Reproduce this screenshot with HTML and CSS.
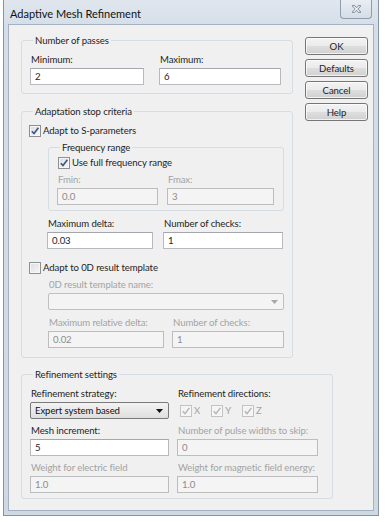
FILE: index.html
```html
<!DOCTYPE html>
<html lang="en">
<head>
    <meta charset="UTF-8">
    <meta name="viewport" content="width=device-width, initial-scale=1.0">
    <title>Adaptive Mesh Refinement</title>
    <link rel="stylesheet" href="styles.css">
</head>
<body>
    <div class="window">
        <div class="titlebar">
            <span class="title">Adaptive Mesh Refinement</span>
            <span class="close-btn">
                <svg width="9" height="8" viewBox="0 0 9 8">
                    <path d="M1.5 1 L7.5 7 M7.5 1 L1.5 7" stroke="#7d8794" stroke-width="2.6" stroke-linecap="square"/>
                    <path d="M1.5 1 L7.5 7 M7.5 1 L1.5 7" stroke="#f4f6f8" stroke-width="1.1"/>
                </svg>
            </span>
        </div>

        <div class="client">
            <div class="top">
                <div class="groups">
                    <fieldset class="group passes">
                        <legend>Number of passes</legend>
                        <div class="fields">
                            <div class="field">
                                <label>Minimum:</label>
                                <div class="input">2</div>
                            </div>
                            <div class="field">
                                <label>Maximum:</label>
                                <div class="input">6</div>
                            </div>
                        </div>
                    </fieldset>

                    <fieldset class="group stop">
                        <legend>Adaptation stop criteria</legend>
                        <div class="check">
                            <span class="box checked"><svg width="10" height="10" viewBox="0 0 10 10"><path d="M1.8 5.2 L4 7.6 L8.4 1.8" fill="none" stroke="#3b5688" stroke-width="1.6"/></svg></span>
                            <span>Adapt to S-parameters</span>
                        </div>

                        <fieldset class="group freq">
                            <legend>Frequency range</legend>
                            <div class="check">
                                <span class="box checked"><svg width="10" height="10" viewBox="0 0 10 10"><path d="M1.8 5.2 L4 7.6 L8.4 1.8" fill="none" stroke="#3b5688" stroke-width="1.6"/></svg></span>
                                <span>Use full frequency range</span>
                            </div>
                            <div class="fields">
                                <div class="field disabled">
                                    <label>Fmin:</label>
                                    <div class="input">0.0</div>
                                </div>
                                <div class="field disabled">
                                    <label>Fmax:</label>
                                    <div class="input">3</div>
                                </div>
                            </div>
                        </fieldset>

                        <div class="fields delta">
                            <div class="field">
                                <label>Maximum delta:</label>
                                <div class="input">0.03</div>
                            </div>
                            <div class="field">
                                <label>Number of checks:</label>
                                <div class="input">1</div>
                            </div>
                        </div>

                        <div class="check template-check">
                            <span class="box"></span>
                            <span>Adapt to 0D result template</span>
                        </div>

                        <div class="field disabled template">
                            <label>0D result template name:</label>
                            <div class="select">
                                <span></span>
                                <svg width="7" height="4" viewBox="0 0 7 4"><path d="M0 0 H7 L3.5 4 Z" fill="#a8a8a8"/></svg>
                            </div>
                        </div>

                        <div class="fields rel-delta">
                            <div class="field disabled">
                                <label>Maximum relative delta:</label>
                                <div class="input">0.02</div>
                            </div>
                            <div class="field disabled">
                                <label>Number of checks:</label>
                                <div class="input">1</div>
                            </div>
                        </div>
                    </fieldset>
                </div>

                <div class="buttons">
                    <button class="btn">OK</button>
                    <button class="btn">Defaults</button>
                    <button class="btn">Cancel</button>
                    <button class="btn">Help</button>
                </div>
            </div>

            <fieldset class="group refine">
                <legend>Refinement settings</legend>
                <div class="fields">
                    <div class="field">
                        <label>Refinement strategy:</label>
                        <div class="select active">
                            <span>Expert system based</span>
                            <svg width="7" height="4" viewBox="0 0 7 4"><path d="M0 0 H7 L3.5 4 Z" fill="#111"/></svg>
                        </div>
                    </div>
                    <div class="field">
                        <label>Refinement directions:</label>
                        <div class="dirs">
                            <div class="check disabled">
                                <span class="box checked"><svg width="10" height="10" viewBox="0 0 10 10"><path d="M1.8 5.2 L4 7.6 L8.4 1.8" fill="none" stroke="#b4b4b4" stroke-width="1.4"/></svg></span>
                                <span>X</span>
                            </div>
                            <div class="check disabled">
                                <span class="box checked"><svg width="10" height="10" viewBox="0 0 10 10"><path d="M1.8 5.2 L4 7.6 L8.4 1.8" fill="none" stroke="#b4b4b4" stroke-width="1.4"/></svg></span>
                                <span>Y</span>
                            </div>
                            <div class="check disabled">
                                <span class="box checked"><svg width="10" height="10" viewBox="0 0 10 10"><path d="M1.8 5.2 L4 7.6 L8.4 1.8" fill="none" stroke="#b4b4b4" stroke-width="1.4"/></svg></span>
                                <span>Z</span>
                            </div>
                        </div>
                    </div>
                    <div class="field">
                        <label>Mesh increment:</label>
                        <div class="input">5</div>
                    </div>
                    <div class="field disabled">
                        <label>Number of pulse widths to skip:</label>
                        <div class="input">0</div>
                    </div>
                    <div class="field disabled">
                        <label>Weight for electric field</label>
                        <div class="input">1.0</div>
                    </div>
                    <div class="field disabled">
                        <label>Weight for magnetic field energy:</label>
                        <div class="input">1.0</div>
                    </div>
                </div>
            </fieldset>
        </div>
    </div>
</body>
</html>
```

FILE: styles.css
```css
body {
    margin: 0;
    background: #fff;
    font-family: Lato, "Liberation Sans", sans-serif;
    font-size: 9.6px;
    letter-spacing: -0.1px;
    color: #1e1e1e;
}
.window {
    margin-left: 3px;
    width: 376px;
    height: 516px;
    box-sizing: border-box;
    border: 1px solid #8593a3;
    border-top: 0;
    background: linear-gradient(180deg, #dfe6ee 0, #d4dde8 30px, #cfd9e4 100%);
    padding: 0 4px 4px;
    display: flex;
    flex-direction: column;
}
.titlebar {
    height: 24px;
    display: flex;
    justify-content: space-between;
    align-items: flex-start;
}
.title {
    font-size: 11px;
    letter-spacing: 0;
    color: #111;
    padding: 7px 0 0 2px;
    line-height: 13px;
}
.close-btn {
    width: 32px;
    height: 19px;
    box-sizing: border-box;
    margin-right: 2px;
    border: 1px solid #8f9cac;
    border-top: 0;
    border-radius: 0 0 4px 4px;
    background: linear-gradient(180deg, #e9eef4, #d5dde7);
    display: flex;
    align-items: center;
    justify-content: center;
}
.client {
    flex: 1;
    border: 1px solid #a3b1c0;
    background: #f0f0f0;
    padding: 9px 0 0 12px;
}
.top {
    display: flex;
    gap: 12px;
    align-items: flex-start;
    margin-bottom: 10px;
}
.groups {
    width: 272px;
    display: flex;
    flex-direction: column;
    gap: 11px;
}
.buttons {
    display: flex;
    flex-direction: column;
    gap: 4px;
    margin-top: 3px;
}
.btn {
    width: 63px;
    height: 18px;
    padding: 0;
    border: 1px solid #767676;
    border-radius: 3px;
    background: linear-gradient(180deg, #f3f3f3 0%, #ebebeb 48%, #dedede 52%, #d0d0d0 100%);
    box-shadow: inset 0 0 0 1px rgba(255, 255, 255, 0.7);
    font: inherit;
    letter-spacing: inherit;
    color: #1e1e1e;
}

/* group boxes */
.group {
    margin: 0;
    border: 1px solid #d5dde3;
    border-radius: 3px;
    min-width: 0;
}
.group legend {
    padding: 0 2px;
    margin-left: 3px;
    line-height: 13px;
}
.passes {
    padding: 6px 8px 8px;
}
.stop {
    padding: 6px 8px 9px;
}
.freq {
    margin: 4px 0 0 18px;
    padding: 2px 8px 5px;
}
.refine {
    width: 312px;
    box-sizing: border-box;
    padding: 6px 13px 5px 8px;
}

.fields {
    display: grid;
}
.passes .fields {
    grid-template-columns: 114px 122px;
    column-gap: 15px;
}
.freq .fields {
    grid-template-columns: 101px 107px;
    column-gap: 9px;
    margin-top: 4px;
}
.fields.delta {
    grid-template-columns: 106px 120px;
    column-gap: 10px;
    margin: 6px 0 0 17px;
}
.fields.rel-delta {
    grid-template-columns: 116px 112px;
    column-gap: 8px;
    margin: 6px 0 0 18px;
}
.refine .fields {
    grid-template-columns: 139px 141px;
    column-gap: 8px;
    row-gap: 5px;
}

.field label {
    display: block;
    height: 13px;
    line-height: 13px;
    padding-left: 1px;
    white-space: nowrap;
}
.field.disabled label {
    color: #a3a3a3;
}
.input {
    margin-top: 2px;
    height: 17px;
    box-sizing: border-box;
    padding: 0 4px;
    line-height: 15px;
    background: #fff;
    border: 1px solid #b7bbc0;
    border-top-color: #a4a8ae;
}
.field.disabled .input {
    background: #f4f4f4;
    border-color: #bdbdbd;
    color: #8c8c8c;
}

.template {
    margin: 4px 0 0 18px;
}
.select {
    margin-top: 2px;
    height: 17px;
    box-sizing: border-box;
    padding: 0 5px 0 4px;
    display: flex;
    align-items: center;
    justify-content: space-between;
    border: 1px solid #c0c0c0;
    border-radius: 2px;
    background: #f4f4f4;
}
.select.active {
    border-color: #7a7a7a;
    background: linear-gradient(180deg, #f2f2f2 0%, #e9e9e9 50%, #dedede 100%);
    color: #111;
}

/* check boxes */
.check {
    display: flex;
    align-items: center;
    gap: 2px;
    height: 13px;
    line-height: 13px;
}
.box {
    width: 12px;
    height: 12px;
    box-sizing: border-box;
    border: 1px solid #8e8f8f;
    background: linear-gradient(135deg, #dcdde0 0%, #f7f7f7 100%);
    box-shadow: inset 0 0 0 1px #f6f6f6;
    display: flex;
    align-items: center;
    justify-content: center;
}
.stop > .check {
    margin-left: -1px;
}
.freq .check {
    margin-left: 1px;
}
.template-check {
    margin: 12px 0 0 -1px;
}
.check.disabled {
    color: #a3a3a3;
}
.check.disabled .box {
    border-color: #c3c3c3;
    background: #f4f4f4;
}
.dirs {
    display: flex;
    gap: 11px;
    margin-top: 2px;
    height: 17px;
    align-items: center;
    padding-left: 3px;
}
```
